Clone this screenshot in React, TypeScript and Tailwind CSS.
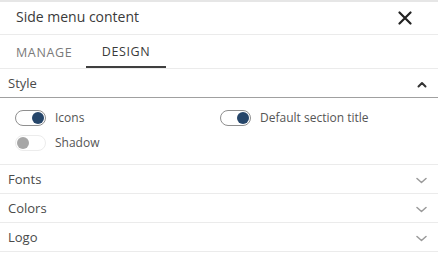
import React from 'react'

const ChevronUp: React.FC = () => (
  <svg width="10" height="7" viewBox="0 0 10 7" fill="none">
    <polyline points="1.5,5.5 5,2 8.5,5.5" stroke="#333" strokeWidth="2" strokeLinecap="round" strokeLinejoin="round" />
  </svg>
)

const ChevronDown: React.FC = () => (
  <svg width="11" height="7" viewBox="0 0 11 7" fill="none">
    <polyline points="1,1.5 5.5,5.5 10,1.5" stroke="#9a9a9a" strokeWidth="1.5" strokeLinecap="round" strokeLinejoin="round" />
  </svg>
)

const Toggle: React.FC<{ on: boolean }> = ({ on }) => (
  <div
    className={
      on
        ? 'w-[31px] h-[16px] rounded-full border border-[#8f8f8f] bg-white flex items-center justify-end px-[1px]'
        : 'w-[31px] h-[16px] rounded-full border border-[#ececec] bg-white flex items-center justify-start px-[1px]'
    }
  >
    <div className={on ? 'w-[12px] h-[12px] rounded-full bg-[#26466a]' : 'w-[12px] h-[12px] rounded-full bg-[#a6a6a6]'} />
  </div>
)

const Row: React.FC<{ label: string }> = ({ label }) => (
  <div className="h-[29px] flex items-center justify-between pl-2 pr-[11px] pt-[2px] border-b border-[#ebebeb]">
    <span className="text-[13px] text-[#4a4a4a]">{label}</span>
    <ChevronDown />
  </div>
)

const App: React.FC = () => {
  return (
    <div className="w-[438px] h-[254px] bg-white border-t-2 border-[#e6e6e6] font-['Open_Sans',sans-serif] overflow-hidden">
      {/* Header */}
      <div className="h-[33px] flex items-center justify-between pl-4 pr-[26px] pb-[3px] border-b border-[#ebebeb]">
        <h2 className="text-[14px] text-[#3a3a3a]">Side menu content</h2>
        <svg width="14" height="14" viewBox="0 0 14 14" fill="none" className="mt-[2px]">
          <path d="M1.5 1.5 L12.5 12.5 M12.5 1.5 L1.5 12.5" stroke="#222" strokeWidth="2.2" strokeLinecap="round" />
        </svg>
      </div>

      {/* Tabs */}
      <div className="h-[34px] flex items-stretch border-b border-[#ebebeb] pl-[16px]">
        <div className="w-[70px] flex items-center pt-[3px] text-[12.5px] tracking-[0.05em] text-[#7a7a7a]">MANAGE</div>
        <div className="w-[80px] flex items-center justify-center pt-[3px] text-[12.5px] tracking-[0.05em] text-[#3a3a3a] border-b-2 border-[#3f3f3f]">
          DESIGN
        </div>
      </div>

      {/* Style */}
      <div className="h-[29px] flex items-center justify-between pl-2 pr-[11px] pt-[2px] border-b border-[#a0a0a0]">
        <span className="text-[13px] text-[#4a4a4a]">Style</span>
        <ChevronUp />
      </div>
      <div className="h-[67px] grid grid-cols-[205px_1fr] content-start gap-y-[9px] pt-3 pl-[15px] border-b border-[#ebebeb]">
        <div className="flex items-center gap-[9px] h-[16px]">
          <Toggle on />
          <span className="text-[12px] text-[#555]">Icons</span>
        </div>
        <div className="flex items-center gap-[9px] h-[16px]">
          <Toggle on />
          <span className="text-[12px] text-[#555]">Default section title</span>
        </div>
        <div className="flex items-center gap-[9px] h-[16px]">
          <Toggle on={false} />
          <span className="text-[12px] text-[#555]">Shadow</span>
        </div>
      </div>

      <Row label="Fonts" />
      <Row label="Colors" />
      <Row label="Logo" />
    </div>
  )
}

export default App
